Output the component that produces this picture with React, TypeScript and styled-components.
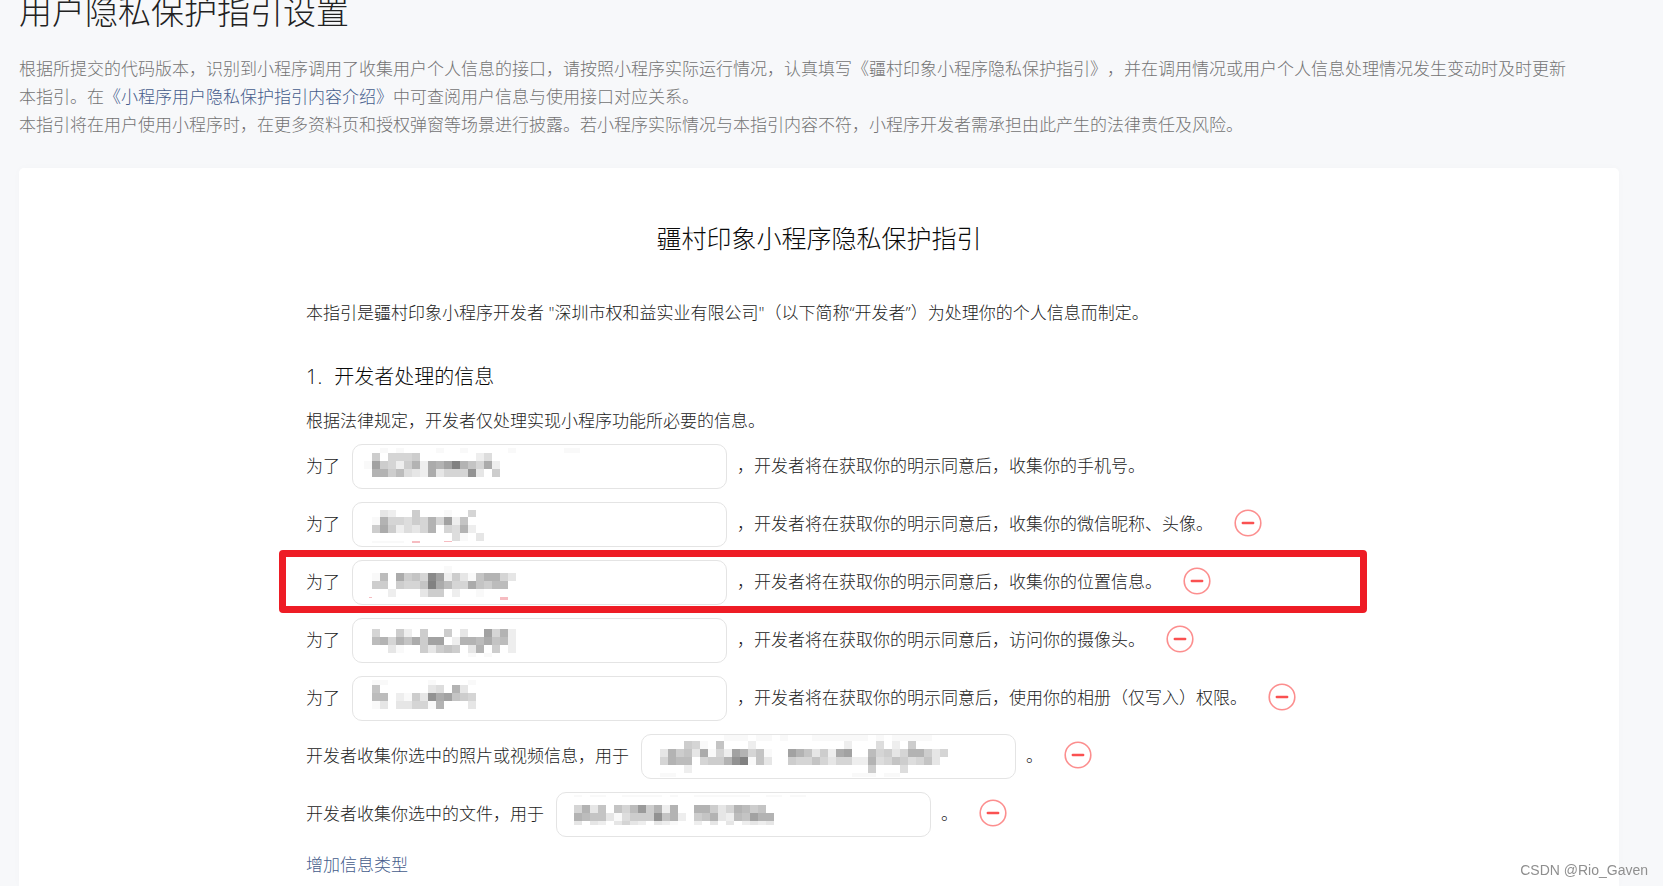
import React from 'react';
import styled, { createGlobalStyle } from 'styled-components';

const GlobalStyle = createGlobalStyle`
  *, *::before, *::after { box-sizing: border-box; }
  body {
    margin: 0;
    background: #f7f8fa;
    color: #222;
    font-family: 'Open Sans', 'Noto Sans CJK SC', sans-serif;
    font-size: 17px;
    font-weight: 300;
    line-height: 28px;
    text-spacing-trim: space-all;
  }
`;

const Page = styled.div`
  display: flex;
  flex-direction: column;
  min-height: 100vh;
  padding: 0 44px 0 19px;
`;

const PageTitle = styled.h1`
  margin: 0 0 31px;
  font-size: 33px;
  line-height: 24px;
  font-weight: 300;
`;

const Notice = styled.p`
  margin: 0;
  color: #737373;
`;

const TextLink = styled.a`
  color: #455c8c;
  text-decoration: none;
`;

const Card = styled.main`
  flex: 1;
  margin-top: 29px;
  padding: 52px 36px 7px;
  background: #fff;
  border-radius: 5px 5px 0 0;
  box-shadow: 0 0 10px rgba(0, 0, 0, 0.02);
`;

const GuideTitle = styled.h2`
  margin: 0 0 43px;
  color: #0a0a0a;
  font-size: 25px;
  line-height: 36px;
  font-weight: 300;
  text-align: center;
`;

const Content = styled.section`
  max-width: 1026px;
  margin: 0 auto;
`;

const Intro = styled.p`
  margin: 0 0 36px;
`;

const SectionTitle = styled.h3`
  display: flex;
  gap: 12px;
  margin: 0 0 16px;
  color: #0a0a0a;
  font-size: 20px;
  font-weight: 300;
`;

const Paragraph = styled.p`
  margin: 0 0 9px;
`;

const Rows = styled.div`
  display: flex;
  flex-direction: column;
  gap: 13px;
  margin-bottom: 14px;
`;

const Row = styled.div<{ $marked?: boolean }>`
  position: relative;
  display: flex;
  align-items: center;
  min-height: 45px;
  white-space: nowrap;

  ${({ $marked }) =>
    $marked &&
    `
    &::after {
      content: '';
      position: absolute;
      inset: -10px -35px -8px -27px;
      border: 7px solid #ee1c25;
      border-radius: 4px;
      pointer-events: none;
    }
  `}
`;

const Label = styled.label`
  padding-bottom: 2px;
`;

const Tail = styled.span`
  padding-bottom: 2px;
`;

const Field = styled.div`
  position: relative;
  width: 375px;
  margin: 0 10px 0 12px;
`;

const TextInput = styled.input`
  display: block;
  width: 100%;
  height: 45px;
  padding: 0 18px;
  border: 1px solid #e4e4e4;
  border-radius: 10px;
  background: #fff;
  color: inherit;
  font: inherit;
  outline: none;
`;

const Mask = styled.svg`
  position: absolute;
  inset: 0;
  width: 100%;
  height: 100%;
  pointer-events: none;
`;

const RemoveButton = styled.button`
  display: flex;
  margin: 0 0 4px 21px;
  padding: 0;
  border: 0;
  background: none;
  cursor: pointer;
`;

const AddLink = styled(TextLink)`
  display: block;
  width: max-content;
`;

const Watermark = styled.div`
  position: fixed;
  right: 15px;
  bottom: 6px;
  color: #8f8f8f;
  font: 400 14px/20px 'Liberation Sans', sans-serif;
`;

/* One strip of mosaic cells: top, height, and a hex darkness per 8px cell. */
type Strip = [number, number, string];
/* Pink remnants: x, y, width, height. */
type Tint = [number, number, number, number];

interface Item {
  before: string;
  after: string;
  removable: boolean;
  marked?: boolean;
  left: number;
  strips: Strip[];
  tints?: Tint[];
}

const items: Item[] = [
  {
    before: '为了',
    after: '，开发者将在获取你的明示同意后，收集你的手机号。',
    removable: false,
    left: 12,
    strips: [
      [4, 5, '..1.1....1..1.....1......11'],
      [9, 8, '.6.5556.......24.'],
      [17, 8, '1b652692a9bf975a2'],
      [25, 8, '.9968432a3555d3.6'],
    ],
  },
  {
    before: '为了',
    after: '，开发者将在获取你的明示同意后，收集你的微信昵称、头像。',
    removable: true,
    left: 20,
    strips: [
      [8, 7, '.32..6...1..5.'],
      [15, 8, '195546595b27..'],
      [23, 8, '6a624359.5492.'],
      [31, 8, '..........41.3'],
      [39, 2, '1111..........'],
    ],
    tints: [
      [60, 39, 8, 2],
      [92, 39, 8, 1],
    ],
  },
  {
    before: '为了',
    after: '，开发者将在获取你的明示同意后，收集你的位置信息。',
    removable: true,
    marked: true,
    left: 20,
    strips: [
      [6, 7, '.........1........'],
      [13, 8, '18.a675eb263179953'],
      [21, 8, '66.6557fa855a7688.'],
      [29, 8, '..2...366.2..1....'],
    ],
    tints: [
      [17, 37, 3, 1],
      [148, 37, 8, 3],
    ],
  },
  {
    before: '为了',
    after: '，开发者将在获取你的明示同意后，访问你的摄像头。',
    removable: true,
    left: 20,
    strips: [
      [11, 8, '5..62.6..6.3..b592'],
      [19, 8, '89597a6bb.2998a782'],
      [27, 8, '..31..63676.39.6.2'],
      [35, 4, '............1.1...'],
    ],
  },
  {
    before: '为了',
    after: '，开发者将在获取你的明示同意后，使用你的相册（仅写入）权限。',
    removable: true,
    left: 20,
    strips: [
      [4, 5, '11.....1....1'],
      [9, 8, '7......34.93.'],
      [17, 8, '88.2163dab765'],
      [25, 8, '13.335519...3'],
    ],
  },
  {
    before: '开发者收集你选中的照片或视频信息，用于',
    after: '。',
    removable: true,
    left: 19,
    strips: [
      [1, 6, '........111.11.1...1111111.1.11111..'],
      [7, 8, '...651.7...2...........2...4.2.6....'],
      [15, 8, '39673a152b9571..b97362ab..8563599635'],
      [23, 8, '5988.5669df173..6557535522945764573.'],
      [31, 8, '...2......................6...4.....'],
      [39, 4, '11......................111.11......'],
    ],
  },
  {
    before: '开发者收集你选中的文件，用于',
    after: '。',
    removable: true,
    left: 18,
    strips: [
      [3, 2, '1.11..11111.1..1111111..11.11'],
      [13, 8, '5937.758c6929..996359867'],
      [21, 8, '9877314666d792.6793287b99'],
      [29, 4, '3.32.3532.321..2.3.3.2323'],
    ],
  },
];

function Mosaic({ left, strips, tints = [] }: Pick<Item, 'left' | 'strips' | 'tints'>) {
  return (
    <Mask aria-hidden="true" shapeRendering="crispEdges">
      {strips.map(([top, height, cells]) =>
        cells.split('').map((cell, i) =>
          cell === '.' ? null : (
            <rect
              key={`${top}-${i}`}
              x={left + i * 8}
              y={top}
              width={8}
              height={height}
              fill="#000"
              fillOpacity={cell === '1' ? 0.025 : parseInt(cell, 16) * 0.033}
            />
          ),
        ),
      )}
      {tints.map(([x, y, width, height]) => (
        <rect key={x} x={x} y={y} width={width} height={height} fill="#f6bcc1" />
      ))}
    </Mask>
  );
}

function MinusCircle() {
  return (
    <svg width="28" height="28" viewBox="0 0 28 28" fill="none" aria-hidden="true">
      <circle cx="14" cy="14" r="12.8" stroke="#fa5151" strokeOpacity="0.65" strokeWidth="1.6" />
      <path d="M8.8 14H19.2" stroke="#fa5151" strokeWidth="2.4" strokeLinecap="round" />
    </svg>
  );
}

export default function App() {
  return (
    <>
      <GlobalStyle />
      <Page lang="zh-CN">
        <PageTitle>用户隐私保护指引设置</PageTitle>
        <Notice>
          根据所提交的代码版本，识别到小程序调用了收集用户个人信息的接口，请按照小程序实际运行情况，认真填写《疆村印象小程序隐私保护指引》，并在调用情况或用户个人信息处理情况发生变动时及时更新
          <br />
          本指引。在<TextLink href="#guide">《小程序用户隐私保护指引内容介绍》</TextLink>中可查阅用户信息与使用接口对应关系。
        </Notice>
        <Notice>
          本指引将在用户使用小程序时，在更多资料页和授权弹窗等场景进行披露。若小程序实际情况与本指引内容不符，小程序开发者需承担由此产生的法律责任及风险。
        </Notice>
        <Card>
          <GuideTitle>疆村印象小程序隐私保护指引</GuideTitle>
          <Content>
            <Intro>
              本指引是疆村印象小程序开发者 "深圳市权和益实业有限公司"（以下简称“开发者”）为处理你的个人信息而制定。
            </Intro>
            <SectionTitle>
              <span>1.</span>
              <span>开发者处理的信息</span>
            </SectionTitle>
            <Paragraph>根据法律规定，开发者仅处理实现小程序功能所必要的信息。</Paragraph>
            <Rows>
              {items.map((item, i) => (
                <Row key={i} $marked={item.marked}>
                  <Label htmlFor={`purpose-${i}`}>{item.before}</Label>
                  <Field>
                    <TextInput id={`purpose-${i}`} type="text" />
                    <Mosaic left={item.left} strips={item.strips} tints={item.tints} />
                  </Field>
                  <Tail>{item.after}</Tail>
                  {item.removable && (
                    <RemoveButton type="button" aria-label="删除">
                      <MinusCircle />
                    </RemoveButton>
                  )}
                </Row>
              ))}
            </Rows>
            <AddLink href="#add">增加信息类型</AddLink>
          </Content>
        </Card>
      </Page>
      <Watermark>CSDN @Rio_Gaven</Watermark>
    </>
  );
}
